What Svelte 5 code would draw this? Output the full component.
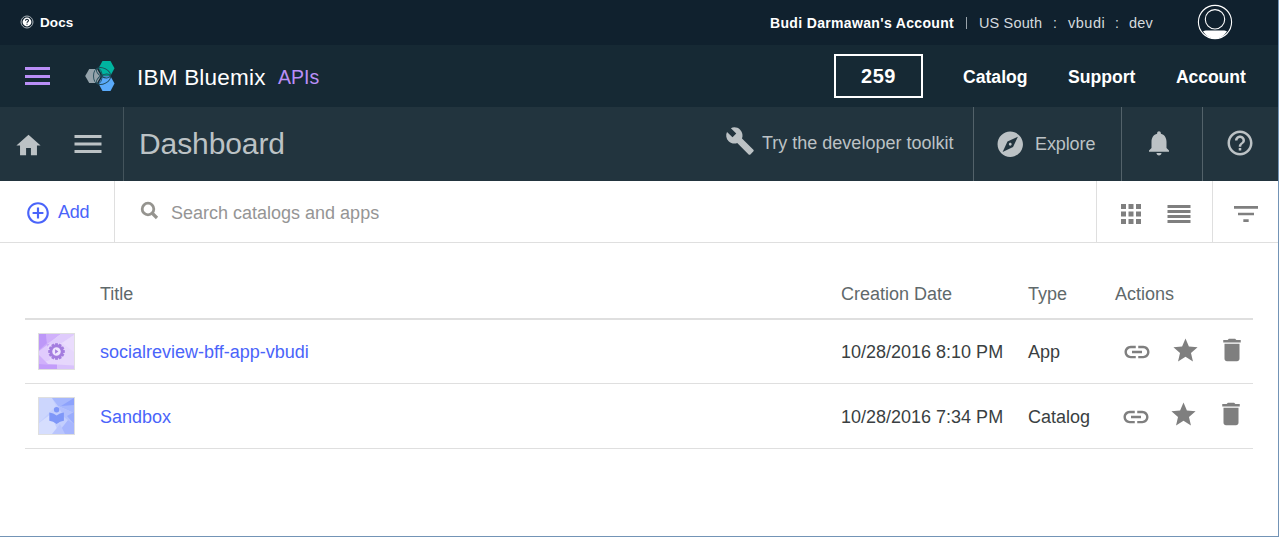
<script>
  const paths = {
    home: 'M10 20v-6h4v6h5v-8h3L12 3 2 12h3v8z',
    menu: 'M3 18h18v-2H3v2zm0-5h18v-2H3v2zm0-7v2h18V6H3z',
    build: 'M22.7 19l-9.1-9.1c.9-2.3.4-5-1.5-6.9-2-2-5-2.4-7.4-1.3L9 6 6 9 1.6 4.7C.4 7.1.9 10.1 2.9 12.1c1.9 1.9 4.6 2.4 6.9 1.5l9.1 9.1c.4.4 1 .4 1.4 0l2.3-2.3c.5-.4.5-1.1.1-1.4z',
    explore: 'M12 10.9c-.61 0-1.1.49-1.1 1.1s.49 1.1 1.1 1.1c.61 0 1.1-.49 1.1-1.1s-.49-1.1-1.1-1.1zM12 2C6.48 2 2 6.48 2 12s4.48 10 10 10 10-4.48 10-10S17.52 2 12 2zm2.19 12.19L6 18l3.81-8.19L18 6l-3.81 8.19z',
    bell: 'M12 22c1.1 0 2-.9 2-2h-4c0 1.1.89 2 2 2zm6-6v-5c0-3.07-1.64-5.64-4.5-6.32V4c0-.83-.67-1.5-1.5-1.5s-1.5.67-1.5 1.5v.68C7.63 5.36 6 7.92 6 11v5l-2 2v1h16v-1l-2-2z',
    help: 'M11 18h2v-2h-2v2zm1-16C6.48 2 2 6.48 2 12s4.48 10 10 10 10-4.48 10-10S17.52 2 12 2zm0 18c-4.41 0-8-3.59-8-8s3.59-8 8-8 8 3.59 8 8-3.59 8-8 8zm0-14c-2.21 0-4 1.79-4 4h2c0-1.1.9-2 2-2s2 .9 2 2c0 2-3 1.75-3 5h2c0-2.25 3-2.5 3-5 0-2.21-1.79-4-4-4z',
    add: 'M13 7h-2v4H7v2h4v4h2v-4h4v-2h-4V7zm-1-5C6.48 2 2 6.48 2 12s4.48 10 10 10 10-4.48 10-10S17.52 2 12 2zm0 18c-4.41 0-8-3.59-8-8s3.59-8 8-8 8 3.59 8 8-3.59 8-8 8z',
    apps: 'M4 8h4V4H4v4zm6 12h4v-4h-4v4zm-6 0h4v-4H4v4zm0-6h4v-4H4v4zm6 0h4v-4h-4v4zm6-10v4h4V4h-4zm-6 4h4V4h-4v4zm6 6h4v-4h-4v4zm0 6h4v-4h-4v4z',
    filter: 'M10 18h4v-2h-4v2zM3 6v2h18V6H3zm3 7h12v-2H6v2z',
    link: 'M3.9 12c0-1.71 1.39-3.1 3.1-3.1h4V7H7c-2.76 0-5 2.24-5 5s2.24 5 5 5h4v-1.9H7c-1.71 0-3.1-1.39-3.1-3.1zM8 13h8v-2H8v2zm9-6h-4v1.9h4c1.71 0 3.1 1.39 3.1 3.1s-1.39 3.1-3.1 3.1h-4V17h4c2.76 0 5-2.24 5-5s-2.24-5-5-5z',
    star: 'M12 17.27L18.18 21l-1.64-7.03L22 9.24l-7.19-.61L12 2 9.19 8.63 2 9.24l5.46 4.73L5.82 21z',
    trash: 'M6 19c0 1.1.9 2 2 2h8c1.1 0 2-.9 2-2V7H6v12zM19 4h-3.5l-1-1h-5l-1 1H5v2h14V4z'
  };

  const rows = [
    { title: 'socialreview-bff-app-vbudi', date: '10/28/2016 8:10 PM', type: 'App', kind: 'app' },
    { title: 'Sandbox', date: '10/28/2016 7:34 PM', type: 'Catalog', kind: 'catalog' }
  ];
</script>

{#snippet icon(name, size, cls)}
  <svg class={cls} width={size} height={size} viewBox="0 0 24 24" fill="currentColor"><path d={paths[name]} /></svg>
{/snippet}

<div class="page">
  <div class="topbar">
    <svg class="docs-icon" width="14" height="14" viewBox="0 0 14 14">
      <circle cx="7" cy="7" r="6" fill="none" stroke="#a9b2b8" stroke-width="1" />
      <circle cx="7" cy="7" r="4.4" fill="#fff" />
      <path d="M5.5 5.8c0-2 3-2 3-.2 0 1.2-1.5 1-1.5 2.2M7 8.7v1.1" fill="none" stroke="#10212e" stroke-width="1.1" />
    </svg>
    <b class="docs">Docs</b>
    <b class="owner">Budi Darmawan's Account</b>
    <span class="bar"></span>
    <span class="region">US South</span>
    <span class="colon c1">:</span>
    <span class="org">vbudi</span>
    <span class="colon c2">:</span>
    <span class="space">dev</span>
    <svg class="avatar" width="36" height="36" viewBox="0 0 36 36">
      <path d="M6 27.400c2-1.400 4.500-.8 8-.8h8c3.500 0 6-.6 8 .8Q25 34.500 18 34.500T6 27.400z" fill="#fff" />
      <circle cx="18" cy="18" r="16.600" fill="none" stroke="#fff" stroke-width="1.100" />
      <circle cx="18" cy="15.300" r="9.700" fill="none" stroke="#fff" stroke-width="1.100" />
    </svg>
  </div>

  <div class="brandbar">
    <div class="burger"><i></i><i></i><i></i></div>
    <svg class="logo" width="31" height="32" viewBox="0 0 31 32">
      <path d="M4.200 9h7.800l4 7-4 7H4.200l-4-7z" fill="#95a3ab" />
      <path d="M17.500 1h8l4 7.300-4 7.400h-8l-4-7.400z" fill="#00b4a0" />
      <path d="M17.500 16.300h8l4 7.300-4 7.400h-8l-4-7.400z" fill="#5aaafa" />
      <g fill="none" stroke="#1f4957" stroke-width=".9">
        <ellipse cx="12.800" cy="16" rx="4.300" ry="7.700" />
        <ellipse cx="18.500" cy="12.700" rx="7.700" ry="4.300" transform="rotate(28 18.500 12.700)" />
        <ellipse cx="18.500" cy="19.300" rx="7.700" ry="4.300" transform="rotate(-28 18.500 19.300)" />
      </g>
    </svg>
    <span class="brand">IBM Bluemix</span>
    <span class="product">APIs</span>
    <b class="count">259</b>
    <b class="nav n1">Catalog</b>
    <b class="nav n2">Support</b>
    <b class="nav n3">Account</b>
  </div>

  <div class="dashbar">
    <div class="cell left">
      {@render icon('home', 29, 'home')}
      {@render icon('menu', 36, 'menu')}
    </div>
    <h1>Dashboard</h1>
    {@render icon('build', 30, 'wrench')}
    <span class="toolkit">Try the developer toolkit</span>
    <div class="cell explore">
      {@render icon('explore', 30.5, 'compass')}
      <span>Explore</span>
    </div>
    <div class="cell bell">{@render icon('bell', 30, '')}</div>
    <div class="cell help">{@render icon('help', 30, '')}</div>
  </div>

  <div class="tools">
    <div class="add">
      {@render icon('add', 26, 'plus')}
      <span>Add</span>
    </div>
    <div class="search">
      <svg width="20" height="20" viewBox="0 0 20 20" fill="none" stroke="#95948f">
        <circle cx="8" cy="8" r="5.800" stroke-width="2.800" />
        <path d="M12 12l5 5" stroke-width="3.200" />
      </svg>
      <span>Search catalogs and apps</span>
    </div>
    <div class="views">
      {@render icon('apps', 30, 'apps')}
      <svg class="lines" width="24" height="18" viewBox="0 0 24 18" fill="#7f7f7f">
        <path d="M.5 0h23v3H.5zM.5 5h23v3H.5zM.5 10h23v3H.5zM.5 15h23v3H.5z" />
      </svg>
    </div>
    <div class="filter">{@render icon('filter', 32, '')}</div>
  </div>

  <div class="table">
    <div class="row head">
      <span></span><span>Title</span><span>Creation Date</span><span>Type</span><span>Actions</span>
    </div>
    {#each rows as r}
      <div class="row item {r.kind}">
        <div class="thumb">
          {#if r.kind === 'app'}
            <svg width="35" height="35" viewBox="0 0 35 35">
              <rect width="35" height="35" fill="#e6d7fc" />
              <path d="M0 0h20L8 13 0 18z" fill="#cba9fa" />
              <path d="M0 0h7l1 9-8 7z" fill="#bd97f8" />
              <path d="M7 0h15L8 10z" fill="#d0b0fb" />
              <path d="M22 0h13v1L23 9 8 10z" fill="#dfcbfc" />
              <path d="M23 9L35 1v17z" fill="#eadcfd" />
              <path d="M0 17l8-6 3 15-11 4z" fill="#e0cbfd" />
              <path d="M0 21l9 9H0z" fill="#d0b0fb" />
              <path d="M0 30l18 .5.500 4.500H0z" fill="#c39dfa" />
              <path d="M18 30.500l17 1V35H18.500z" fill="#d9c2fc" />
              <g transform="translate(17.500 17.500)" fill="#a47ddf">
                {#each Array(12) as _, i}
                  <rect x="-1.400" y="-8.300" width="2.800" height="3.500" transform="rotate({i * 30})" />
                {/each}
                <circle r="5.700" fill="#efe5fe" stroke="#a47ddf" stroke-width="2.900" />
                <path d="M-1.400-2.200v4.400l3.300-2.200z" />
              </g>
            </svg>
          {:else}
            <svg width="35" height="36" viewBox="0 0 35 36">
              <rect width="35" height="36" fill="#c3cefd" />
              <path d="M0 0h13l4 8L0 25z" fill="#ccd6fd" />
              <path d="M0 25l12-9 8 20H0z" fill="#d6defe" />
              <path d="M13 0h22v15L19 8z" fill="#a6b7fd" />
              <path d="M22 8L35 0v7z" fill="#8da2fc" />
              <path d="M19 8l16 7v12l-10-8z" fill="#b3c0fd" />
              <path d="M35 14v12l-7-8z" fill="#9aacfc" />
              <path d="M18 36l11-14 6 4v10z" fill="#a6b5fd" />
              <path d="M13 36l8-10 5 10z" fill="#b9c5fd" />
              <g fill="#7f97f8">
                <circle cx="17.600" cy="11.700" r="2.700" />
                <path d="M10.300 14.500q4.300.4 7.300 3 3-2.600 7.300-3v8.200q-4 .5-7.300 3.200-3.300-2.700-7.300-3.200z" />
              </g>
            </svg>
          {/if}
        </div>
        <span class="name">{r.title}</span>
        <span>{r.date}</span>
        <span>{r.type}</span>
        <div class="actions">
          {@render icon('link', 30, 'link')}
          {@render icon('star', 29, 'star')}
          {@render icon('trash', 30, 'trash')}
        </div>
      </div>
    {/each}
  </div>
</div>

<style>
  :global(body) { margin: 0; background: #fff; }
  .page {
    box-sizing: border-box; width: 1279px; height: 537px; overflow: hidden;
    display: flex; flex-direction: column;
    border-right: 1px solid #7394b6; border-bottom: 1px solid #7394b6;
    font: 18px/20px "Liberation Sans", Arial, sans-serif; color: #3a3f42; white-space: nowrap;
  }
  svg { display: block; flex: none; }
  span, b, h1 { flex: none; box-sizing: border-box; }

  .topbar { display: flex; flex: none; height: 45px; background: #10212e; color: #fff; align-items: flex-start; }
  .topbar > b, .topbar > span { margin-top: 13px; }
  .docs-icon { margin: 15px 0 0 20px; }
  .docs { width: 730px; padding-left: 6px; font-size: 13.500px; letter-spacing: .1px; }
  .owner { width: 202px; padding-left: 6px; font-size: 14px; letter-spacing: .34px; }
  .topbar > .bar { width: 1px; height: 12px; margin-top: 17px; background: #9aa4ab; }
  .region, .org, .space { color: #d5dade; font-size: 14.500px; letter-spacing: .15px; }
  .region { width: 86px; padding-left: 12px; }
  .colon { color: #d5dade; font-size: 14px; }
  .c1 { width: 15px; }
  .org { width: 47px; letter-spacing: .5px; }
  .c2 { width: 14px; }
  .space { width: 68px; }
  .avatar { margin-top: 4px; }

  .brandbar { display: flex; flex: none; height: 62px; background: #162934; color: #fff; align-items: flex-start; }
  .burger { display: flex; flex: none; flex-direction: column; justify-content: space-between; width: 25px; height: 18px; margin: 22px 0 0 25px; }
  .burger i { height: 2px; border-bottom: .5px solid transparent; background: #ba8ff7; }
  .logo { margin: 15px 0 0 35px; }
  .brand { width: 141px; margin: 23px 0 0 21px; font-size: 22.500px; letter-spacing: .22px; }
  .product { width: 556px; margin-top: 22px; color: #ba8ff7; font-size: 19.500px; letter-spacing: 0; }
  .count { box-sizing: border-box; width: 89px; height: 44px; margin-top: 9px; border: 2px solid #fff; text-align: center; font-size: 20px; line-height: 40px; letter-spacing: .6px; }
  .nav { margin-top: 22px; font-size: 17.600px; }
  .n1 { width: 105px; margin-left: 40px; }
  .n2 { width: 108px; }
  .n3 { letter-spacing: -.1px; }

  .dashbar { display: flex; flex: none; height: 74px; background: #22343e; color: #bcc2c5; align-items: flex-start; }
  .cell { box-sizing: border-box; display: flex; flex: none; height: 74px; align-items: flex-start; }
  .left { width: 124px; border-right: 1px solid #44545c; }
  .home { margin: 24px 0 0 13.500px; }
  .menu { margin: 18.500px 0 0 27px; }
  h1 { width: 601px; margin: 22px 0 0; padding-left: 15px; font-size: 30px; line-height: 30px; font-weight: 400; letter-spacing: -.1px; }
  .wrench { margin-top: 19px; }
  .toolkit { width: 218px; margin-top: 26px; padding-left: 7px; }
  .explore, .bell, .help { border-left: 1px solid #53626a; }
  .explore { width: 148px; }
  .compass { margin: 22px 0 0 21px; }
  .explore span { margin: 27px 0 0 9.500px; letter-spacing: -.1px; }
  .bell { width: 81px; padding: 21px 0 0 22px; }
  .help { width: 76px; padding: 21px 0 0 22px; }

  .tools { box-sizing: border-box; display: flex; flex: none; height: 62px; border-bottom: 1px solid #dfdfdf; color: #7f7f7f; }
  .tools > div { box-sizing: border-box; display: flex; flex: none; align-items: flex-start; }
  .add { width: 115px; border-right: 1px solid #dfdfdf; color: #4a64fa; }
  .plus { margin: 18.500px 0 0 24.500px; }
  .add span { margin: 21px 0 0 7.500px; letter-spacing: -.3px; }
  .search { width: 981px; color: #959595; }
  .search svg { margin: 20px 0 0 25px; }
  .search span { margin: 22px 0 0 11px; }
  .views { width: 116px; border-left: 1px solid #dfdfdf; }
  .apps { margin: 18px 0 0 19px; }
  .lines { margin: 24px 0 0 21px; }
  .filter { width: 66px; border-left: 1px solid #dfdfdf; padding: 17px 0 0 17px; }

  .table { margin: 0 25px; }
  .row { display: grid; grid-template-columns: 75px 741px 187px 87px 138px; box-sizing: border-box; align-items: start; }
  .head { height: 77px; padding-top: 41px; border-bottom: 2px solid #dfdfdf; color: #5f696b; }
  .item { height: 64px; border-bottom: 1px solid #dfdfdf; }
  .item > span { margin-top: 22px; }
  .catalog { height: 65px; }
  .catalog > span { margin-top: 23px; }
  .name { color: #4a64fa; }
  .thumb { width: 35px; margin: 13px 0 0 13px; border: 1px solid #dfdfdf; }
  .actions { display: flex; color: #7f7f7f; }
  .link { margin: 17px 0 0 7px; }
  .star { margin: 16px 0 0 18.500px; }
  .trash { margin: 15px 0 0 17.500px; }
  .catalog .link { margin: 18px 0 0 6px; }
  .catalog .star { margin: 16px 0 0 17.500px; }
  .catalog .trash { margin: 15px 0 0 18.500px; }
</style>
